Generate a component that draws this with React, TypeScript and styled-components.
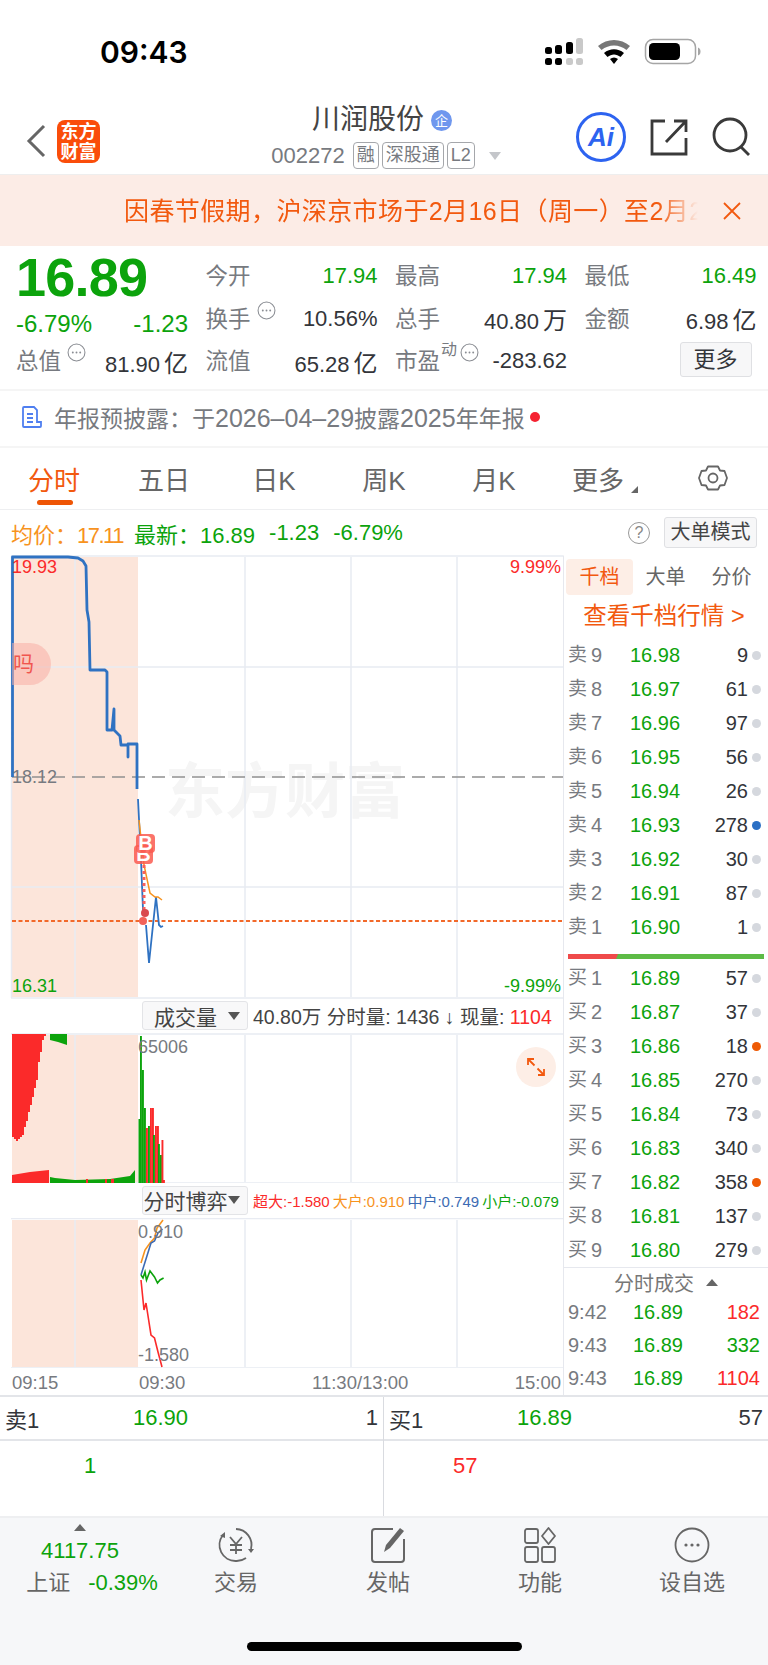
import { FC, ReactNode } from 'react';
import styled, { createGlobalStyle } from 'styled-components';

const GREEN = '#0ca30c';
const RED = '#fb2a2a';
const ORANGE = '#f2590f';
const GOLD = '#f7931e';
const BLUE = '#3d6bb3';
const GREY = '#777a80';
const DARK = '#33353a';
const GRID = '#e8ebf2';
const SHADE = '#fce5da';

const GlobalStyle = createGlobalStyle`
  html, body {
    margin: 0;
    padding: 0;
    background: #fff;
  }
  body {
    width: 768px;
    height: 1665px;
    overflow: hidden;
    font-family: "Liberation Sans", "Noto Sans CJK SC", sans-serif;
    color: ${DARK};
  }
  * {
    box-sizing: border-box;
  }
`;

const sellBook = [
  ['9', '16.98', '9', ''],
  ['8', '16.97', '61', ''],
  ['7', '16.96', '97', ''],
  ['6', '16.95', '56', ''],
  ['5', '16.94', '26', ''],
  ['4', '16.93', '278', '#2b6fc4'],
  ['3', '16.92', '30', ''],
  ['2', '16.91', '87', ''],
  ['1', '16.90', '1', ''],
];

const buyBook = [
  ['1', '16.89', '57', ''],
  ['2', '16.87', '37', ''],
  ['3', '16.86', '18', '#ee5a05'],
  ['4', '16.85', '270', ''],
  ['5', '16.84', '73', ''],
  ['6', '16.83', '340', ''],
  ['7', '16.82', '358', '#ee5a05'],
  ['8', '16.81', '137', ''],
  ['9', '16.80', '279', ''],
];

const trades = [
  ['9:42', '16.89', '182', RED],
  ['9:43', '16.89', '332', GREEN],
  ['9:43', '16.89', '1104', RED],
];

// x, top of bar
const openBars: [number, number, string][] = [
  [138.5, 1119, GREEN],
  [140, 1036, GREEN],
  [142, 1070, GREEN],
  [144, 1108, GREEN],
  [146, 1128, RED],
  [148, 1126, GREEN],
  [150, 1108, RED],
  [152, 1108, RED],
  [153, 1135, GREEN],
  [155, 1126, RED],
  [157, 1126, RED],
  [158, 1144, GREEN],
  [160, 1155, GREEN],
  [161.5, 1140, RED],
  [163, 1180, RED],
];

const preCurve = [
  [12, 1137], [14, 1139], [16, 1141], [18, 1139], [20, 1137], [22, 1135], [24, 1127], [26, 1121],
  [28, 1112], [30, 1105], [32, 1097], [34, 1088], [36, 1080], [38, 1062], [40, 1052], [42, 1040], [44, 1036], [46, 1034],
];

const Ellipsis: FC = () => (
  <HintSvg viewBox="0 0 18 18">
    <circle cx="9" cy="9" r="8" fill="none" stroke="#8a8d93" strokeWidth="1" />
    <circle cx="5.5" cy="9" r="0.9" fill="#8a8d93" />
    <circle cx="9" cy="9" r="0.9" fill="#8a8d93" />
    <circle cx="12.5" cy="9" r="0.9" fill="#8a8d93" />
  </HintSvg>
);

const Stat: FC<{ label: ReactNode; value: ReactNode; color?: string }> = ({ label, value, color }) => (
  <StatCell>
    <StatLabel>{label}</StatLabel>
    <StatValue $color={color}>{value}</StatValue>
  </StatCell>
);

const BookRow: FC<{ side: string; row: string[] }> = ({ side, row }) => (
  <BookLine>
    <BookLabel>
      <i>{side}</i>
      <b>{row[0]}</b>
    </BookLabel>
    <BookPrice>{row[1]}</BookPrice>
    <BookQty>{row[2]}</BookQty>
    <BookDot $color={row[3]} />
  </BookLine>
);

const MainChart: FC = () => (
  <ChartSvg viewBox="0 555 563 444" width="563" height="444">
    <rect x="12" y="557" width="126" height="440" fill={SHADE} />
    <g stroke={GRID} strokeWidth="1.5" fill="none">
      <path d="M11 556H563M11 998H563M11.5 556V998" />
      <path d="M11 667H563M11 887H563M75 557V997M245 557V997M351 557V997M457 557V997" />
    </g>
    <path d="M12 777H563" stroke="#909090" strokeWidth="1.5" strokeDasharray="13 7" />
    <path d="M12 921H563" stroke="#f2692a" strokeWidth="1.8" strokeDasharray="4 2.5" />
    <path
      d="M12.5 777V557H68L78 558L83 561L86 566L87 610L89 622L90 670H105L107 672V730H112L114 709V730L117 733L120 736L121 745H128V757V744H137V789"
      fill="none"
      stroke="#2f72c2"
      strokeWidth="2.8"
      strokeLinejoin="round"
    />
    <path
      d="M138 799L141 860L143 910M146 925L149 963L153 925L156 897L159 925L161 927L163 926"
      fill="none"
      stroke="#2f72c2"
      strokeWidth="1.8"
    />
    <path d="M139 820L144 865L150 893L155 897L158 897L162 900" fill="none" stroke="#f7931e" strokeWidth="1.5" />
    <path d="M144 865V910" stroke="#f9605c" strokeWidth="3" strokeDasharray="3 3" />
    <circle cx="145" cy="913" r="4" fill="#d94a4f" />
    <circle cx="143" cy="921" r="4" fill="#f2635a" />
  </ChartSvg>
);

const VolumeChart: FC = () => (
  <ChartSvg viewBox="0 1033 563 150" width="563" height="150">
    <rect x="12" y="1035" width="126" height="147" fill={SHADE} />
    <g stroke={GRID} strokeWidth="1.5" fill="none">
      <path d="M11 1034H563M11 1183H563M75 1035V1182M245 1035V1182M351 1035V1182M457 1035V1182" />
    </g>
    {preCurve.map(([x, y]) => (
      <rect key={x} x={x} y="1034" width="2" height={y - 1034} fill={RED} />
    ))}
    <path d="M50 1034H67V1045L58 1042L50 1040Z" fill={GREEN} />
    <path d="M12 1175L30 1172L49 1170V1183H12Z" fill={RED} />
    <path d="M50 1177L55 1178L75 1180L110 1179L130 1176L135 1170V1183H50Z" fill={GREEN} />
    <path d="M86 1179h2v4h-2ZM105 1179h2v4h-2ZM111 1179h3v4h-3Z" fill={RED} />
    {openBars.map(([x, y, color]) => (
      <rect key={x} x={x} y={y} width="1.9" height={1183 - y} fill={color} />
    ))}
  </ChartSvg>
);

const FlowChart: FC = () => (
  <ChartSvg viewBox="0 1218 563 150" width="563" height="150">
    <rect x="12" y="1220" width="126" height="147" fill={SHADE} />
    <g stroke={GRID} strokeWidth="1.5" fill="none">
      <path d="M11 1218.5H563M11 1368H563M75 1220V1367M245 1220V1367M351 1220V1367M457 1220V1367" />
    </g>
    <g fill="none" strokeWidth="1.6">
      <path d="M141 1263L145 1250L150 1243L154.500 1238L157 1228L163 1220" stroke={GOLD} />
      <path d="M141 1275L151 1243L154.500 1241L158 1233L162.500 1229" stroke={BLUE} />
      <path d="M141 1275L143 1278L145 1272L146.500 1280L150 1271L154.500 1277L157.500 1283L160 1280L163.600 1278" stroke={GREEN} />
      <path d="M141 1280L144 1310L146 1303L151 1335L154.500 1338L158 1352L162 1367" stroke={RED} />
    </g>
  </ChartSvg>
);

const App: FC = () => {
  return (
    <Page>
      <GlobalStyle />
      <StatusBar>
        <Clock>09:43</Clock>
        <svg width="156" height="30" viewBox="546 37 156 30">
          <g fill="#000">
            <rect x="546" y="47" width="7" height="7" rx="2.500" />
            <rect x="556" y="45" width="7" height="9" rx="2.500" />
            <rect x="567" y="42" width="7" height="12" rx="2.500" />
            <rect x="546" y="58" width="7" height="7" rx="2.500" />
            <rect x="556" y="58" width="7" height="7" rx="2.500" />
          </g>
          <g fill="#c9c9c9">
            <rect x="577" y="38" width="7" height="16" rx="2.500" />
            <rect x="567" y="58" width="7" height="7" rx="2.500" />
            <rect x="577" y="58" width="7" height="7" rx="2.500" />
          </g>
          <path d="M599 46C608 38 622 38 631 46L627.500 50C620 44 610 44 602.500 50Z" fill="#777" />
          <path d="M605 53C611 48 619 48 625 53L621.500 57C617.500 53.500 612.500 53.500 608.500 57Z" fill="#000" />
          <path d="M611 59C613.500 57 616.500 57 619 59L615 64Z" fill="#000" />
          <rect x="646.500" y="39.500" width="50" height="24" rx="7.500" fill="none" stroke="#a5a5a5" strokeWidth="1.500" />
          <rect x="650" y="43" width="31" height="17" rx="4.500" fill="#000" />
          <path d="M699 47.500C701 48.500 701.500 49.500 701.500 51.500C701.500 53.500 701 54.500 699 55.500Z" fill="#a5a5a5" />
        </svg>
      </StatusBar>

      <NavBar>
        <NavLeft>
          <svg width="20" height="34" viewBox="0 0 20 34">
            <path d="M18 2L3 17L18 32" fill="none" stroke="#666" strokeWidth="3" />
          </svg>
          <BrandMark>
            东方
            <br />
            财富
          </BrandMark>
        </NavLeft>
        <NavCenter>
          <TitleRow>
            <StockName>川润股份</StockName>
            <EnterpriseBadge>企</EnterpriseBadge>
          </TitleRow>
          <CodeRow>
            <StockCode>002272</StockCode>
            <TagBadge>融</TagBadge>
            <TagBadge>深股通</TagBadge>
            <TagBadge>L2</TagBadge>
            <CaretDown $color="#c4c6ca" $gap={11} />
          </CodeRow>
        </NavCenter>
        <NavRight>
          <AiButton>Ai</AiButton>
          <svg width="38" height="38" viewBox="0 0 38 38">
            <path d="M15 3H2V36H36V20M36 3L16 24M24 3H36V14" fill="none" stroke="#3a3a3a" strokeWidth="2.800" />
          </svg>
          <svg width="40" height="40" viewBox="0 0 40 40">
            <circle cx="18" cy="18" r="16" fill="none" stroke="#3a3a3a" strokeWidth="2.800" />
            <path d="M29 30L37 38" stroke="#3a3a3a" strokeWidth="2.800" />
          </svg>
        </NavRight>
      </NavBar>

      <Banner>
        <BannerText>因春节假期，沪深京市场于2月16日（周一）至2月20日（周五）休市</BannerText>
        <svg width="20" height="20" viewBox="0 0 20 20">
          <path d="M2 2L18 18M18 2L2 18" stroke={ORANGE} strokeWidth="1.800" />
        </svg>
      </Banner>

      <Quote>
        <PriceBlock>
          <BigPrice>16.89</BigPrice>
          <PriceChange>
            <span>-6.79%</span>
            <span>-1.23</span>
          </PriceChange>
        </PriceBlock>
        <Stat label="今开" value="17.94" color={GREEN} />
        <Stat label="最高" value="17.94" color={GREEN} />
        <Stat label="最低" value="16.49" color={GREEN} />
        <Stat label={<>换手<Ellipsis /></>} value="10.56%" />
        <Stat label="总手" value={<>40.80<Unit>万</Unit></>} />
        <Stat label="金额" value={<>6.98<Unit>亿</Unit></>} />
        <Stat label={<>总值<Ellipsis /></>} value={<>81.90<Unit>亿</Unit></>} />
        <Stat label="流值" value={<>65.28<Unit>亿</Unit></>} />
        <Stat label={<>市盈<Sup>动</Sup><Ellipsis /></>} value="-283.62" />
        <MoreCell>
          <MoreButton>更多</MoreButton>
        </MoreCell>
      </Quote>

      <Notice>
        <svg width="20" height="22" viewBox="0 0 20 22">
          <path d="M1 2a1 1 0 0 1 1-1h10l3 3v12h4v4a1 1 0 0 1-1 1H2a1 1 0 0 1-1-1Z" fill="#fff" stroke="#4f7ff0" strokeWidth="1.800" />
          <path d="M5 8h6M5 12h6M5 16h6" stroke="#4f7ff0" strokeWidth="1.800" />
        </svg>
        <NoticeText>
          年报预披露：于<NoticeNum>2026–04–29</NoticeNum>披露<NoticeNum>2025</NoticeNum>年年报
        </NoticeText>
        <NoticeDot />
      </Notice>

      <Tabs>
        <Tab $active>分时</Tab>
        <Tab>五日</Tab>
        <Tab>日K</Tab>
        <Tab>周K</Tab>
        <Tab>月K</Tab>
        <Tab $inset={14}>
          更多
          <CornerMark />
        </Tab>
        <Tab $inset={4}>
          <svg width="30" height="30" viewBox="0 0 30 30">
            <path
              d="M10 3.500H20L22 7.500L26.500 8L29 15L26.500 22L22 22.500L20 26.500H10L8 22.500L3.500 22L1 15L3.500 8L8 7.500Z"
              fill="none"
              stroke="#666"
              strokeWidth="1.800"
              strokeLinejoin="round"
            />
            <circle cx="15" cy="15" r="4.500" fill="none" stroke="#666" strokeWidth="1.800" />
          </svg>
        </Tab>
      </Tabs>

      <InfoRow>
        <InfoItem $color={GOLD} $width={123}>
          均价：<NarrowNum>17.11</NarrowNum>
        </InfoItem>
        <InfoItem $color={GREEN}>最新：16.89</InfoItem>
        <InfoItem $color={GREEN} $gap={14}>-1.23</InfoItem>
        <InfoItem $color={GREEN} $gap={14}>-6.79%</InfoItem>
        <HelpMark>?</HelpMark>
        <ModeButton>大单模式</ModeButton>
      </InfoRow>

      <Body>
        <Charts>
          <ChartPanel $height={444}>
            <Watermark>东方财富</Watermark>
            <MainChart />
            <ChartLabel $left={12} $top={12} $color={RED}>19.93</ChartLabel>
            <ChartLabel $left={12} $top={222} $color={GREY}>18.12</ChartLabel>
            <ChartLabel $left={12} $top={431} $color={GREEN}>16.31</ChartLabel>
            <ChartLabel $right={2} $top={12} $color={RED}>9.99%</ChartLabel>
            <ChartLabel $right={2} $top={431} $color={GREEN}>-9.99%</ChartLabel>
            <AskPill>吗</AskPill>
            <SignalTag $left={134} $top={290}>B</SignalTag>
            <SignalTag $left={136} $top={279}>B</SignalTag>
          </ChartPanel>
          <PaneHeader $height={34}>
            <PaneSelect>
              <span>成交量</span>
              <CaretDown />
            </PaneSelect>
            <PaneText>
              40.80万 分时量: 1436 ↓ 现量: <Colored $color={RED}>1104</Colored>
            </PaneText>
          </PaneHeader>
          <ChartPanel $height={150}>
            <VolumeChart />
            <ChartLabel $left={138} $top={14} $color={GREY}>65006</ChartLabel>
            <ExpandButton>
              <svg width="20" height="20" viewBox="0 0 20 20">
                <path d="M2 8V2H8M2 2L8.500 8.500M18 12V18H12M18 18L11.500 11.500" fill="none" stroke={ORANGE} strokeWidth="1.800" />
              </svg>
            </ExpandButton>
          </ChartPanel>
          <PaneHeader $height={35}>
            <PaneSelect>
              <span>分时博弈</span>
              <CaretDown />
            </PaneSelect>
            <Legend>
              <Colored $color={RED}>超大:-1.580</Colored>
              <Colored $color={GOLD}>大户:0.910</Colored>
              <Colored $color={BLUE}>中户:0.749</Colored>
              <Colored $color={GREEN}>小户:-0.079</Colored>
            </Legend>
          </PaneHeader>
          <ChartPanel $height={150}>
            <FlowChart />
            <ChartLabel $left={138} $top={14} $color={GREY}>0.910</ChartLabel>
            <ChartLabel $left={138} $top={137} $color={GREY}>-1.580</ChartLabel>
          </ChartPanel>
          <TimeAxis>
            <span>09:15</span>
            <span>09:30</span>
            <span>11:30/13:00</span>
            <span>15:00</span>
          </TimeAxis>
        </Charts>

        <BookPanel>
          <BookTabs>
            <BookTab $active>千档</BookTab>
            <BookTab>大单</BookTab>
            <BookTab>分价</BookTab>
          </BookTabs>
          <DepthLink>查看千档行情 &gt;</DepthLink>
          {sellBook.map((row) => (
            <BookRow key={row[0]} side="卖" row={row} />
          ))}
          <RatioBar>
            <RatioRed />
          </RatioBar>
          {buyBook.map((row) => (
            <BookRow key={row[0]} side="买" row={row} />
          ))}
          <TradeHeader>
            分时成交
            <CaretUp />
          </TradeHeader>
          {trades.map((t, i) => (
            <TradeLine key={i}>
              <TradeTime>{t[0]}</TradeTime>
              <TradePrice>{t[1]}</TradePrice>
              <TradeQty $color={t[3]}>{t[2]}</TradeQty>
            </TradeLine>
          ))}
        </BookPanel>
      </Body>

      <BestQuotes>
        <BestCell>
          <BestHead>
            <span>卖1</span>
            <BestPrice>16.90</BestPrice>
            <span>1</span>
          </BestHead>
          <BestCount $inset={84} $color={GREEN}>1</BestCount>
        </BestCell>
        <BestCell>
          <BestHead>
            <span>买1</span>
            <BestPrice>16.89</BestPrice>
            <span>57</span>
          </BestHead>
          <BestCount $inset={69} $color={RED}>57</BestCount>
        </BestCell>
      </BestQuotes>

      <BottomBar>
        <IndexCell>
          <CaretUp />
          <IndexValue>4117.75</IndexValue>
          <IndexLine>
            <span>上证</span>
            <Colored $color={GREEN}>-0.39%</Colored>
          </IndexLine>
        </IndexCell>
        <ActionCell>
          <svg width="38" height="36" viewBox="0 0 38 36">
            <g fill="none" stroke="#666" strokeWidth="1.800">
              <path d="M6 8A16 16 0 0 0 19 34" />
              <path d="M19 2A16 16 0 0 1 34 22M29 31A16 16 0 0 1 19 34" />
              <path d="M13 10L19 17L25 10M19 17V27M13 18H25M13 23H25" />
            </g>
            <path d="M3 9L8 5L8 11ZM31 22H37L34 26Z" fill="#666" />
          </svg>
          <ActionLabel>交易</ActionLabel>
        </ActionCell>
        <ActionCell>
          <svg width="38" height="36" viewBox="0 0 38 36">
            <path d="M24 2H6a3 3 0 0 0-3 3v27a3 3 0 0 0 3 3h26a3 3 0 0 0 3-3V12" fill="none" stroke="#666" strokeWidth="2" />
            <path d="M31 1L35 4L21 21L15 25L17 18Z" fill="#666" />
          </svg>
          <ActionLabel>发帖</ActionLabel>
        </ActionCell>
        <ActionCell>
          <svg width="38" height="36" viewBox="0 0 38 36">
            <g fill="none" stroke="#666" strokeWidth="1.800">
              <rect x="4" y="2" width="13" height="14" rx="2" />
              <rect x="4" y="20" width="13" height="15" rx="2" />
              <rect x="21" y="20" width="13" height="15" rx="2" />
              <path d="M27.500 1L34 9L27.500 17L21 9Z" strokeLinejoin="round" />
            </g>
          </svg>
          <ActionLabel>功能</ActionLabel>
        </ActionCell>
        <ActionCell>
          <svg width="38" height="36" viewBox="0 0 38 36">
            <circle cx="19" cy="18" r="16.500" fill="none" stroke="#666" strokeWidth="1.800" />
            <circle cx="13" cy="18" r="1.600" fill="#666" />
            <circle cx="19" cy="18" r="1.600" fill="#666" />
            <circle cx="25" cy="18" r="1.600" fill="#666" />
          </svg>
          <ActionLabel>设自选</ActionLabel>
        </ActionCell>
        <HomeBar />
      </BottomBar>
    </Page>
  );
};

const Page = styled.div`
  width: 768px;
  height: 1665px;
  display: flex;
  flex-direction: column;
  overflow: hidden;
`;

const StatusBar = styled.div`
  height: 100px;
  display: flex;
  align-items: flex-start;
  justify-content: space-between;
  padding: 37px 67px 0 100px;
`;

const Clock = styled.div`
  font-family: Inter, sans-serif;
  font-size: 30px;
  font-weight: 600;
  line-height: 30px;
  color: #000;
`;

const NavBar = styled.div`
  height: 75px;
  display: grid;
  grid-template-columns: 220px 324px 1fr;
  align-items: center;
  border-bottom: 1px solid #eee;
`;

const NavLeft = styled.div`
  display: flex;
  align-items: center;
  gap: 11px;
  padding: 8px 0 0 26px;
`;

const BrandMark = styled.div`
  width: 43px;
  height: 43px;
  flex: none;
  border-radius: 8px;
  background: #fa4d0a;
  color: #fff;
  font-size: 18px;
  font-weight: 700;
  line-height: 20px;
  text-align: center;
  padding-top: 2px;
`;

const NavCenter = styled.div`
  display: flex;
  flex-direction: column;
  align-items: center;
  gap: 4px;
  padding-bottom: 3px;
`;

const TitleRow = styled.div`
  display: flex;
  align-items: center;
  gap: 7px;
`;

const StockName = styled.div`
  font-size: 28px;
  line-height: 36px;
  color: #444;
`;

const EnterpriseBadge = styled.div`
  width: 21px;
  height: 21px;
  border-radius: 50%;
  background: #6f97ee;
  color: #fff;
  font-size: 13px;
  line-height: 21px;
  text-align: center;
`;

const CodeRow = styled.div`
  display: flex;
  align-items: center;
  height: 27px;
  margin-left: 8px;
`;

const StockCode = styled.div`
  font-size: 22px;
  color: ${GREY};
  margin-right: 8px;
`;

const TagBadge = styled.div`
  border: 1px solid #a5a7ab;
  border-radius: 4px;
  padding: 0 3px;
  height: 27px;
  font-size: 18px;
  line-height: 25px;
  color: ${GREY};
  margin-right: 3px;
`;

const CaretDown = styled.span<{ $color?: string; $gap?: number }>`
  display: inline-block;
  width: 0;
  height: 0;
  margin-left: ${(p) => p.$gap ?? 0}px;
  border-left: 6px solid transparent;
  border-right: 6px solid transparent;
  border-top: 8px solid ${(p) => p.$color ?? '#555'};
`;

const CaretUp = styled.span`
  display: inline-block;
  width: 0;
  height: 0;
  border-left: 6px solid transparent;
  border-right: 6px solid transparent;
  border-bottom: 7px solid #666;
`;

const NavRight = styled.div`
  display: flex;
  align-items: center;
  gap: 24px;
  padding-right: 16px;
  justify-content: flex-end;
`;

const AiButton = styled.div`
  position: relative;
  width: 50px;
  height: 50px;
  border-radius: 50%;
  border: 3px solid #2d63f0;
  color: #2d63f0;
  font-size: 26px;
  font-weight: 900;
  font-style: italic;
  line-height: 44px;
  text-align: center;
`;

const Banner = styled.div`
  height: 71px;
  display: flex;
  align-items: center;
  background: #fcece6;
  padding: 0 26px 0 124px;
  justify-content: space-between;
`;

const BannerText = styled.div`
  width: 574px;
  font-size: 25px;
  letter-spacing: 0.400px;
  line-height: 30px;
  color: ${ORANGE};
  white-space: nowrap;
  overflow: hidden;
  mask-image: linear-gradient(to right, #000 93%, transparent 100%);
`;

const Quote = styled.div`
  height: 145px;
  display: grid;
  grid-template-columns: 172px 172px 172px 172px;
  grid-auto-rows: 42.500px;
  column-gap: 17.500px;
  padding: 9px 0 0 16px;
  border-bottom: 2px solid #f5f5f5;
`;

const PriceBlock = styled.div`
  grid-row: 1 / span 2;
  display: flex;
  flex-direction: column;
`;

const BigPrice = styled.div`
  font-size: 54px;
  font-weight: 700;
  line-height: 44px;
  color: ${GREEN};
  letter-spacing: -0.800px;
`;

const PriceChange = styled.div`
  display: flex;
  justify-content: space-between;
  margin-top: 12px;
  font-size: 24px;
  line-height: 26px;
  color: ${GREEN};
`;

const StatCell = styled.div`
  display: flex;
  align-items: center;
  justify-content: space-between;
  height: 42.500px;
  font-size: 22px;
  white-space: nowrap;
`;

const StatLabel = styled.span`
  display: inline-flex;
  color: ${GREY};
  font-size: 22.500px;
  margin-top: -4px;
`;

const StatValue = styled.span<{ $color?: string }>`
  color: ${(p) => p.$color ?? DARK};
`;

const Unit = styled.span`
  font-size: 24px;
  margin-left: 4px;
`;

const HintSvg = styled.svg`
  width: 19px;
  height: 19px;
  margin: 0 0 0 6px;
`;

const Sup = styled.span`
  font-size: 16px;
  line-height: 16px;
  margin: -1px -3px 0 1px;
`;

const MoreCell = styled.div`
  display: flex;
  align-items: center;
  justify-content: flex-end;
  padding-right: 5px;
`;

const MoreButton = styled.div`
  width: 72px;
  height: 35px;
  background: #f7f7f8;
  border: 1px solid #dfe0e3;
  border-radius: 3px;
  font-size: 22px;
  line-height: 33px;
  text-align: center;
  margin-top: -3px;
`;

const Notice = styled.div`
  height: 57px;
  display: flex;
  align-items: center;
  padding: 0 0 3px 22px;
  border-bottom: 2px solid #f5f5f5;
`;

const NoticeText = styled.div`
  margin-left: 12px;
  font-size: 23px;
  color: ${GREY};
  white-space: nowrap;
`;

const NoticeNum = styled.span`
  font-size: 25px;
`;

const NoticeDot = styled.span`
  width: 10px;
  height: 10px;
  border-radius: 50%;
  background: #f52231;
  margin-left: 5px;
`;

const Tabs = styled.div`
  height: 62px;
  display: grid;
  grid-template-columns: repeat(7, 110px);
  border-bottom: 1px solid #eeeff1;
`;

const Tab = styled.div<{ $active?: boolean; $inset?: number }>`
  position: relative;
  display: flex;
  align-items: center;
  justify-content: center;
  font-size: 26px;
  padding: 0 ${(p) => p.$inset ?? 2}px 1px 0;
  color: ${(p) => (p.$active ? ORANGE : '#666')};
  &::after {
    content: '';
    display: ${(p) => (p.$active ? 'block' : 'none')};
    position: absolute;
    left: 37px;
    width: 36px;
    bottom: 4px;
    height: 5px;
    border-radius: 3px;
    background: #ee5505;
  }
`;

const CornerMark = styled.span`
  position: absolute;
  left: 81px;
  bottom: 16px;
  width: 0;
  height: 0;
  border-left: 7px solid transparent;
  border-bottom: 7px solid #666;
`;

const InfoRow = styled.div`
  height: 45px;
  display: flex;
  align-items: center;
  padding: 0 11px;
  font-size: 22px;
`;

const InfoItem = styled.span<{ $color: string; $gap?: number; $width?: number }>`
  color: ${(p) => p.$color};
  margin-left: ${(p) => p.$gap ?? 0}px;
  ${(p) => (p.$width ? `width: ${p.$width}px;` : '')}
  white-space: nowrap;
`;

const NarrowNum = styled.span`
  letter-spacing: -1.500px;
`;

const HelpMark = styled.span`
  width: 22px;
  height: 22px;
  margin-left: auto;
  border: 1.500px solid #999;
  border-radius: 50%;
  color: #888;
  font-size: 16px;
  line-height: 19px;
  text-align: center;
`;

const ModeButton = styled.div`
  width: 93px;
  height: 31px;
  margin-left: 14px;
  background: #f7f7f8;
  border: 1px solid #dfe0e3;
  border-radius: 3px;
  font-size: 20px;
  line-height: 29px;
  text-align: center;
  color: #444;
`;

const Body = styled.div`
  height: 840px;
  display: flex;
`;

const Charts = styled.div`
  width: 563px;
  display: flex;
  flex-direction: column;
`;

const ChartPanel = styled.div<{ $height: number }>`
  position: relative;
  height: ${(p) => p.$height}px;
  flex: none;
`;

const ChartSvg = styled.svg`
  display: block;
  position: relative;
`;

const Watermark = styled.div`
  position: absolute;
  left: 165px;
  top: 203px;
  font-size: 60px;
  line-height: 70px;
  font-weight: 700;
  color: #f5f5f5;
  white-space: nowrap;
`;

const ChartLabel = styled.span<{ $left?: number; $right?: number; $top: number; $color: string }>`
  position: absolute;
  ${(p) => (p.$left !== undefined ? `left: ${p.$left}px;` : '')}
  ${(p) => (p.$right !== undefined ? `right: ${p.$right}px;` : '')}
  top: ${(p) => p.$top}px;
  transform: translateY(-50%);
  font-size: 18px;
  line-height: 20px;
  color: ${(p) => p.$color};
`;

const AskPill = styled.div`
  position: absolute;
  left: 12px;
  top: 88px;
  width: 39px;
  height: 42px;
  border-radius: 0 21px 21px 0;
  background: rgba(248, 175, 165, 0.55);
  color: #f0564f;
  font-size: 21px;
  line-height: 42px;
  padding-left: 1px;
`;

const SignalTag = styled.div<{ $left: number; $top: number }>`
  position: absolute;
  left: ${(p) => p.$left}px;
  top: ${(p) => p.$top}px;
  width: 19px;
  height: 19px;
  border-radius: 4px;
  background: rgba(250, 90, 80, 0.85);
  color: #fff;
  font-size: 20px;
  font-weight: 700;
  line-height: 19px;
  text-align: center;
`;

const ExpandButton = styled.div`
  position: absolute;
  left: 516px;
  top: 14px;
  width: 40px;
  height: 40px;
  border-radius: 50%;
  background: #fdeee6;
  display: flex;
  align-items: center;
  justify-content: center;
`;

const PaneHeader = styled.div<{ $height: number }>`
  height: ${(p) => p.$height}px;
  flex: none;
  display: flex;
  align-items: center;
  padding: 0 0 1px 142px;
`;

const PaneSelect = styled.div`
  width: 106px;
  height: 29px;
  display: flex;
  align-items: center;
  padding-right: 7px;
  background: #f8f8f9;
  border: 1px solid #e3e4e7;
  border-radius: 3px;
  font-size: 21px;
  color: #444;
  white-space: nowrap;
  span:first-child {
    flex: 1;
    text-align: center;
  }
`;

const PaneText = styled.div`
  margin-left: 5px;
  font-size: 19.500px;
  color: #444;
  white-space: nowrap;
`;

const Legend = styled.div`
  margin-left: 5px;
  display: flex;
  gap: 3px;
  font-size: 15px;
  white-space: nowrap;
`;

const Colored = styled.span<{ $color: string }>`
  color: ${(p) => p.$color};
`;

const TimeAxis = styled.div`
  height: 27px;
  display: grid;
  grid-template-columns: 127px 173px 180px 1fr;
  align-items: center;
  padding: 2px 2px 0 12px;
  font-size: 18.500px;
  color: ${GREY};
  span:last-child {
    text-align: right;
  }
`;

const BookPanel = styled.div`
  width: 205px;
  border-left: 1.500px solid #e6e8ee;
  border-top: 1px solid transparent;
`;

const BookTabs = styled.div`
  display: grid;
  grid-template-columns: 67px 65px 67px;
  padding: 3px 0 0 2px;
  height: 39px;
`;

const BookTab = styled.div<{ $active?: boolean }>`
  height: 36px;
  border-radius: 4px;
  font-size: 20px;
  line-height: 36px;
  text-align: center;
  color: ${(p) => (p.$active ? ORANGE : '#666')};
  background: ${(p) => (p.$active ? '#fdeee6' : 'transparent')};
`;

const DepthLink = styled.div`
  height: 43px;
  padding-right: 4px;
  font-size: 23.500px;
  line-height: 43px;
  text-align: center;
  color: ${ORANGE};
  white-space: nowrap;
`;

const BookLine = styled.div`
  height: 34px;
  display: grid;
  grid-template-columns: 62px 50px 68px 16px;
  align-items: center;
  padding-left: 4px;
  font-size: 20px;
`;

const BookLabel = styled.span`
  display: flex;
  align-items: center;
  color: ${GREY};
  white-space: nowrap;
  i {
    font-size: 19px;
    font-style: normal;
    line-height: 24px;
  }
  b {
    font-size: 20px;
    font-weight: 400;
    margin-left: 4px;
  }
`;

const BookPrice = styled.span`
  color: ${GREEN};
  text-align: right;
`;

const BookQty = styled.span`
  color: ${DARK};
  text-align: right;
`;

const BookDot = styled.span<{ $color: string }>`
  justify-self: center;
  width: 9px;
  height: 9px;
  border-radius: 50%;
  background: ${(p) => p.$color || '#d5d8de'};
`;

const RatioBar = styled.div`
  height: 5px;
  margin: 10px 0 2px 4px;
  width: 196px;
  background: #5dbb46;
`;

const RatioRed = styled.div`
  width: 50px;
  height: 5px;
  background: #ef4a4a;
  clip-path: polygon(0 0, 100% 0, 96% 100%, 0 100%);
`;

const TradeHeader = styled.div`
  height: 29px;
  display: flex;
  align-items: center;
  justify-content: center;
  gap: 12px;
  border-top: 1.500px solid #e6e8ee;
  font-size: 20px;
  color: #777;
`;

const TradeLine = styled.div`
  height: 33px;
  display: grid;
  grid-template-columns: 55px 60px 77px;
  align-items: center;
  padding-left: 4px;
  font-size: 20px;
`;

const TradeTime = styled.span`
  color: ${GREY};
`;

const TradePrice = styled.span`
  color: ${GREEN};
  text-align: right;
`;

const TradeQty = styled.span<{ $color: string }>`
  color: ${(p) => p.$color};
  text-align: right;
`;

const BestQuotes = styled.div`
  height: 123px;
  display: grid;
  grid-template-columns: 383px 385px;
  border-top: 2px solid #e3e5e9;
  border-bottom: 2px solid #eeeff1;
`;

const BestCell = styled.div`
  & + & {
    border-left: 1.500px solid #d9dbe0;
  }
`;

const BestHead = styled.div`
  height: 44px;
  display: grid;
  grid-template-columns: 128px 1fr auto;
  align-items: center;
  padding: 0 5px;
  font-size: 22px;
  border-bottom: 2px solid #e3e5e9;
`;

const BestPrice = styled.span`
  color: ${GREEN};
`;

const BestCount = styled.div<{ $inset: number; $color: string }>`
  padding: 11px 0 0 ${(p) => p.$inset}px;
  font-size: 22px;
  line-height: 28px;
  color: ${(p) => p.$color};
`;

const BottomBar = styled.div`
  position: relative;
  flex: 1;
  display: grid;
  grid-template-columns: 160px repeat(4, 152px);
  align-items: start;
  background: #f6f7f9;
  padding-top: 6px;
`;

const IndexCell = styled.div`
  display: flex;
  flex-direction: column;
  align-items: center;
  font-size: 22px;
`;

const IndexValue = styled.div`
  color: ${GREEN};
  line-height: 26px;
  margin-top: 7px;
`;

const IndexLine = styled.div`
  display: flex;
  gap: 18px;
  margin: 3px 0 0 24px;
  line-height: 32px;
  color: #666;
  white-space: nowrap;
`;

const ActionCell = styled.div`
  display: flex;
  flex-direction: column;
  align-items: center;
  padding-top: 3px;
  svg {
    display: block;
  }
`;

const ActionLabel = styled.div`
  font-size: 22px;
  line-height: 32px;
  margin-top: 4px;
  color: #666;
`;

const HomeBar = styled.div`
  position: absolute;
  left: 247px;
  top: 124px;
  width: 275px;
  height: 9px;
  border-radius: 5px;
  background: #000;
`;

export default App;
